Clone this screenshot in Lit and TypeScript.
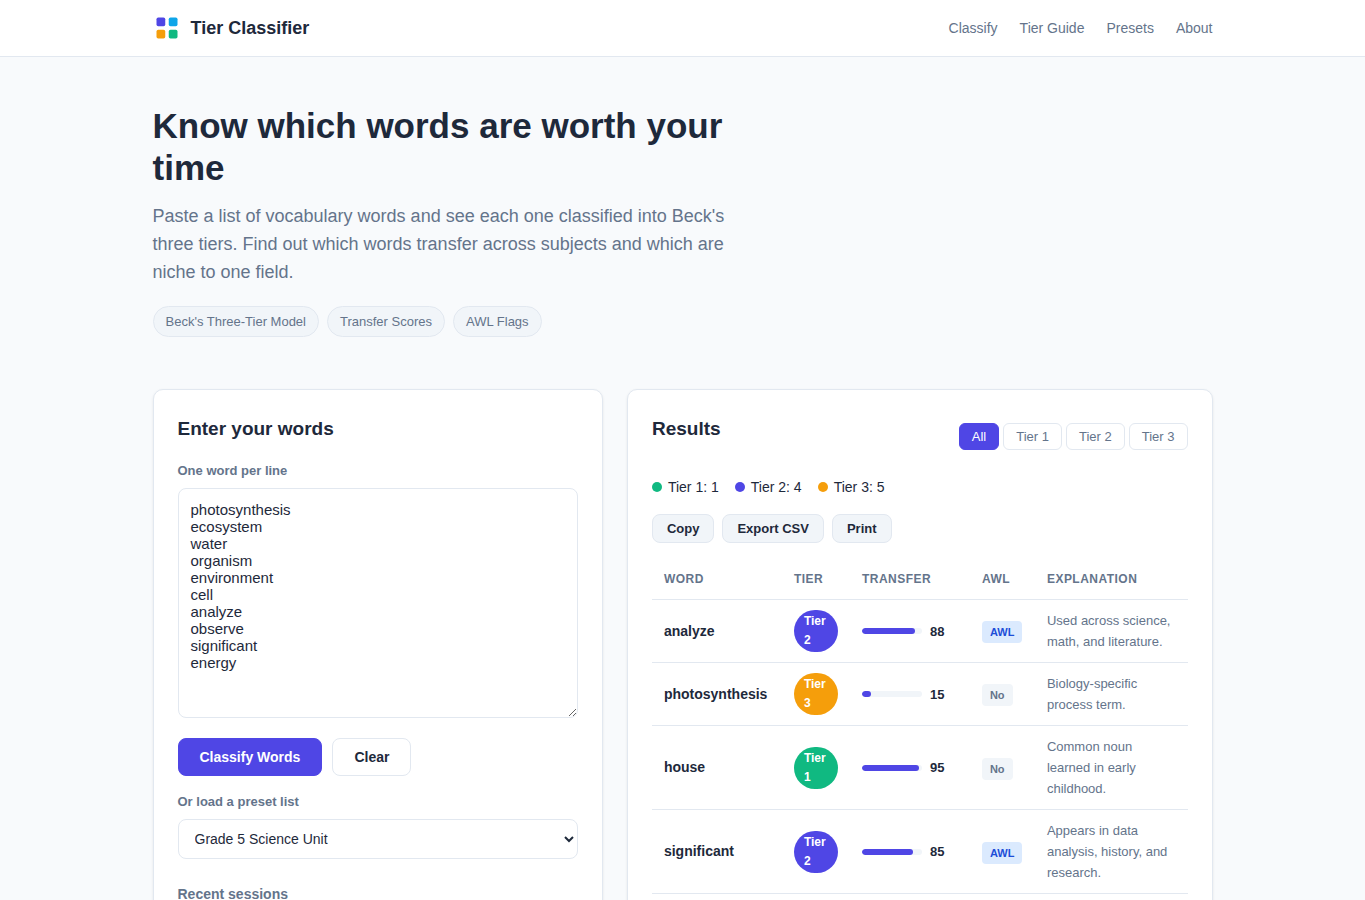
import { LitElement, html, css } from "lit";
import { customElement, state } from "lit/decorators.js";
import { classMap } from "lit/directives/class-map.js";
import { styleMap } from "lit/directives/style-map.js";

interface WordResult {
  word: string;
  tier: 1 | 2 | 3;
  transfer: number;
  awl: boolean;
  explanation: string;
}

const RESULTS: WordResult[] = [
  { word: "analyze", tier: 2, transfer: 88, awl: true, explanation: "Used across science, math, and literature." },
  { word: "photosynthesis", tier: 3, transfer: 15, awl: false, explanation: "Biology-specific process term." },
  { word: "house", tier: 1, transfer: 95, awl: false, explanation: "Common noun learned in early childhood." },
  { word: "significant", tier: 2, transfer: 85, awl: true, explanation: "Appears in data analysis, history, and research." },
];

const WORDS = [
  "photosynthesis",
  "ecosystem",
  "water",
  "organism",
  "environment",
  "cell",
  "analyze",
  "observe",
  "significant",
  "energy",
].join("\n");

@customElement("app-root")
export class AppRoot extends LitElement {
  @state() private filter = 0;
  @state() private words = WORDS;

  static styles = css`
    :host {
      display: block;
      min-height: 100vh;
      background: #f8fafc;
      color: #1e293b;
      font-family: "Liberation Sans", Arial, sans-serif;
      font-size: 16px;
      line-height: 26px;
    }
    *,
    *::before,
    *::after {
      box-sizing: border-box;
    }
    h1,
    h2,
    h3,
    p {
      margin: 0;
    }
    .container {
      max-width: 1100px;
      margin: 0 auto;
      padding: 0 20px;
    }
    .site-header {
      background: #fff;
      border-bottom: 1px solid #e2e8f0;
    }
    .bar {
      display: flex;
      align-items: center;
      justify-content: space-between;
      padding-top: 14px;
      padding-bottom: 14px;
    }
    .brand {
      display: flex;
      align-items: center;
      gap: 10px;
      color: inherit;
      text-decoration: none;
      font-size: 18px;
      font-weight: 700;
      line-height: 28px;
    }
    .brand svg {
      display: block;
    }
    .nav {
      display: flex;
      gap: 22px;
    }
    .nav a {
      color: #64748b;
      font-size: 14px;
      text-decoration: none;
    }
    .hero {
      padding-top: 48px;
      padding-bottom: 52px;
    }
    .hero h1 {
      max-width: 600px;
      font-size: 35px;
      line-height: 42px;
      margin-bottom: 13px;
    }
    .lead {
      max-width: 600px;
      color: #64748b;
      font-size: 18px;
      line-height: 28px;
      margin-bottom: 20px;
    }
    .pills {
      display: flex;
      flex-wrap: wrap;
      gap: 8px;
    }
    .pill {
      padding: 4px 12px;
      border: 1px solid #e2e8f0;
      border-radius: 20px;
      background: #f1f5f9;
      color: #64748b;
      font-size: 13px;
      line-height: 21px;
    }
    .columns {
      display: grid;
      grid-template-columns: minmax(0, 1fr) minmax(0, 1.3fr);
      gap: 24px;
      padding-bottom: 48px;
    }
    .card {
      padding: 24px;
      border: 1px solid #e2e8f0;
      border-radius: 10px;
      background: #fff;
      box-shadow: 0 1px 3px rgba(0, 0, 0, 0.08);
    }
    .card h2 {
      font-size: 19px;
      line-height: 30px;
      margin-bottom: 16px;
    }
    .field-label {
      display: block;
      margin-bottom: 6px;
      color: #64748b;
      font-size: 13px;
      font-weight: 700;
      line-height: 22px;
    }
    .words {
      display: block;
      width: 100%;
      min-height: 230px;
      padding: 12px;
      border: 1px solid #e2e8f0;
      border-radius: 8px;
      background: #fff;
      color: inherit;
      font: 15px/17px "Liberation Sans", Arial, sans-serif;
      resize: vertical;
    }
    button {
      font-family: inherit;
      line-height: normal;
      cursor: pointer;
    }
    .actions {
      display: flex;
      gap: 10px;
      margin: 20px 0 15px;
    }
    .btn {
      padding: 10px 21px;
      border: 1px solid #e2e8f0;
      border-radius: 8px;
      background: #fff;
      color: #1e293b;
      font-size: 14px;
      font-weight: 700;
    }
    .btn.primary {
      border-color: #4f46e5;
      background: #4f46e5;
      color: #fff;
    }
    .preset {
      display: block;
      width: 100%;
      height: 40px;
      padding: 0 12px;
      border: 1px solid #e2e8f0;
      border-radius: 8px;
      background: #fff;
      color: inherit;
      font: 14px "Liberation Sans", Arial, sans-serif;
    }
    .recent {
      margin-top: 24px;
      color: #64748b;
      font-size: 14px;
      line-height: 23px;
    }
    .results-head {
      display: flex;
      align-items: flex-start;
      justify-content: space-between;
      margin-bottom: 16px;
    }
    .filters {
      display: flex;
      gap: 4px;
      padding-top: 9px;
    }
    .filter {
      padding: 5px 12px;
      border: 1px solid #e2e8f0;
      border-radius: 6px;
      background: #fff;
      color: #64748b;
      font-size: 13px;
    }
    .filter.active {
      border-color: #4f46e5;
      background: #4f46e5;
      color: #fff;
    }
    .legend {
      display: flex;
      gap: 16px;
      margin-bottom: 16px;
      font-size: 14px;
      line-height: 22px;
    }
    .legend-item {
      display: flex;
      align-items: center;
      gap: 6px;
    }
    .dot {
      width: 10px;
      height: 10px;
      border-radius: 50%;
    }
    .tier-1 {
      background: #10b981;
    }
    .tier-2 {
      background: #4f46e5;
    }
    .tier-3 {
      background: #f59e0b;
    }
    .exports {
      display: flex;
      gap: 8px;
      margin-bottom: 16px;
    }
    .export {
      padding: 6px 14px;
      border: 1px solid #e2e8f0;
      border-radius: 8px;
      background: #f1f5f9;
      color: #1e293b;
      font-size: 13px;
      font-weight: 700;
    }
    .results {
      width: 100%;
      border-collapse: collapse;
    }
    .results th,
    .results td {
      padding: 10px 12px;
      border-bottom: 1px solid #e2e8f0;
      text-align: left;
      vertical-align: middle;
    }
    .results thead th {
      color: #64748b;
      font-size: 12px;
      line-height: 20px;
      letter-spacing: 0.04em;
      text-transform: uppercase;
    }
    .col-word {
      width: 130px;
    }
    .col-tier {
      width: 68px;
    }
    .col-transfer {
      width: 120px;
    }
    .col-awl {
      width: 65px;
    }
    .results tbody th {
      font-size: 14px;
      font-weight: 700;
      line-height: 23px;
    }
    .badge {
      display: block;
      width: 44px;
      padding: 2px 10px;
      border-radius: 22px;
      color: #fff;
      font-size: 12px;
      font-weight: 700;
      line-height: 19px;
    }
    .transfer {
      display: flex;
      align-items: center;
      gap: 8px;
      font-size: 13px;
      font-weight: 700;
      line-height: 21px;
    }
    .track {
      flex: none;
      width: 60px;
      height: 6px;
      overflow: hidden;
      border-radius: 3px;
      background: #f1f5f9;
    }
    .fill {
      height: 100%;
      border-radius: 3px;
      background: #4f46e5;
    }
    .awl {
      display: inline-block;
      padding: 2px 8px;
      border-radius: 4px;
      background: #f1f5f9;
      color: #64748b;
      font-size: 11px;
      font-weight: 700;
      line-height: 18px;
    }
    .awl.yes {
      background: #dbeafe;
      color: #1d4ed8;
    }
    .results .explanation {
      color: #64748b;
      font-size: 13px;
      line-height: 21px;
    }
    @media (max-width: 800px) {
      .columns {
        grid-template-columns: minmax(0, 1fr);
      }
    }
  `;

  private renderRow(r: WordResult) {
    return html`
      <tr>
        <th scope="row">${r.word}</th>
        <td><span class="badge tier-${r.tier}">Tier ${r.tier}</span></td>
        <td>
          <div class="transfer">
            <div class="track"><div class="fill" style=${styleMap({ width: `${r.transfer}%` })}></div></div>
            <span>${r.transfer}</span>
          </div>
        </td>
        <td><span class=${classMap({ awl: true, yes: r.awl })}>${r.awl ? "AWL" : "No"}</span></td>
        <td class="explanation">${r.explanation}</td>
      </tr>
    `;
  }

  render() {
    const rows = RESULTS.filter((r) => this.filter === 0 || r.tier === this.filter);
    return html`
      <header class="site-header">
        <div class="container bar">
          <a class="brand" href="#">
            <svg width="28" height="28" viewBox="0 0 32 32" aria-hidden="true">
              <rect x="4" y="4" width="10" height="10" rx="2" fill="#4f46e5" />
              <rect x="18" y="4" width="10" height="10" rx="2" fill="#0ea5e9" />
              <rect x="4" y="18" width="10" height="10" rx="2" fill="#f59e0b" />
              <rect x="18" y="18" width="10" height="10" rx="2" fill="#10b981" />
            </svg>
            <span>Tier Classifier</span>
          </a>
          <nav class="nav">
            <a href="#classify">Classify</a>
            <a href="#guide">Tier Guide</a>
            <a href="#presets">Presets</a>
            <a href="#about">About</a>
          </nav>
        </div>
      </header>
      <main class="container">
        <section class="hero">
          <h1>Know which words are worth your time</h1>
          <p class="lead">
            Paste a list of vocabulary words and see each one classified into Beck's three tiers. Find out which words
            transfer across subjects and which are niche to one field.
          </p>
          <div class="pills">
            <span class="pill">Beck's Three-Tier Model</span>
            <span class="pill">Transfer Scores</span>
            <span class="pill">AWL Flags</span>
          </div>
        </section>
        <div class="columns" id="classify">
          <section class="card">
            <h2>Enter your words</h2>
            <label class="field-label" for="words">One word per line</label>
            <textarea
              class="words"
              id="words"
              spellcheck="false"
              .value=${this.words}
              @input=${(e: Event) => (this.words = (e.target as HTMLTextAreaElement).value)}
            ></textarea>
            <div class="actions">
              <button class="btn primary" type="button">Classify Words</button>
              <button class="btn" type="button" @click=${() => (this.words = "")}>Clear</button>
            </div>
            <label class="field-label" for="preset">Or load a preset list</label>
            <select class="preset" id="preset">
              <option>Grade 5 Science Unit</option>
            </select>
            <h3 class="recent">Recent sessions</h3>
          </section>
          <section class="card">
            <div class="results-head">
              <h2>Results</h2>
              <div class="filters">
                ${["All", "Tier 1", "Tier 2", "Tier 3"].map(
                  (label, i) => html`<button
                    type="button"
                    class=${classMap({ filter: true, active: this.filter === i })}
                    @click=${() => (this.filter = i)}
                  >
                    ${label}
                  </button>`
                )}
              </div>
            </div>
            <div class="legend">
              ${[1, 4, 5].map(
                (count, i) => html`<span class="legend-item"
                  ><span class="dot tier-${i + 1}"></span>Tier ${i + 1}: ${count}</span
                >`
              )}
            </div>
            <div class="exports">
              <button class="export" type="button">Copy</button>
              <button class="export" type="button">Export CSV</button>
              <button class="export" type="button">Print</button>
            </div>
            <table class="results">
              <thead>
                <tr>
                  <th class="col-word" scope="col">Word</th>
                  <th class="col-tier" scope="col">Tier</th>
                  <th class="col-transfer" scope="col">Transfer</th>
                  <th class="col-awl" scope="col">AWL</th>
                  <th scope="col">Explanation</th>
                </tr>
              </thead>
              <tbody>
                ${rows.map((r) => this.renderRow(r))}
              </tbody>
            </table>
          </section>
        </div>
      </main>
    `;
  }
}
